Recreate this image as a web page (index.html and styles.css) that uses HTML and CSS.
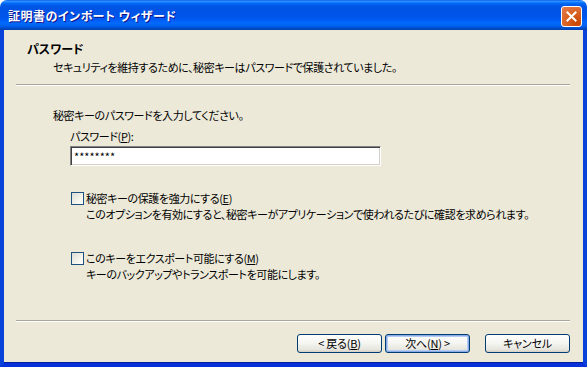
FILE: index.html
```html
<!DOCTYPE html>
<html lang="ja">
<head>
    <meta charset="UTF-8">
    <title>証明書のインポート ウィザード</title>
    <link rel="stylesheet" href="styles.css">
</head>
<body>
    <div class="window">
        <div class="titlebar">
            <span class="titlebar__text">証明書のインポート ウィザード</span>
            <button class="close-btn" aria-label="閉じる">
                <svg viewBox="0 0 21 21" width="21" height="21">
                    <path d="M6 6l9 9M15 6l-9 9" stroke="#fff" stroke-width="2.2" stroke-linecap="square"/>
                </svg>
            </button>
        </div>
        <div class="frame">
            <div class="header">
                <h1 class="header__title">パスワード</h1>
                <p class="header__desc">セキュリティを維持するために、秘密キーはパスワードで保護されていました。</p>
            </div>
            <div class="separator"></div>

            <div class="content">
                <p class="prompt">秘密キーのパスワードを入力してください。</p>

                <div class="field">
                    <label class="field__label" for="pw">パスワード(<u>P</u>):</label>
                    <input class="field__input" id="pw" type="text" value="********">
                </div>

                <div class="option">
                    <span class="checkbox"></span>
                    <div class="option__text">
                        <div>秘密キーの保護を強力にする(<u>E</u>)</div>
                        <div>このオプションを有効にすると、秘密キーがアプリケーションで使われるたびに確認を求められます。</div>
                    </div>
                </div>

                <div class="option option--second">
                    <span class="checkbox"></span>
                    <div class="option__text">
                        <div>このキーをエクスポート可能にする(<u>M</u>)</div>
                        <div>キーのバックアップやトランスポートを可能にします。</div>
                    </div>
                </div>
            </div>

            <div class="footer">
                <div class="separator separator--footer"></div>
                <div class="buttons">
                    <button class="btn">&lt; 戻る(<u>B</u>)</button>
                    <button class="btn btn--default">次へ(<u>N</u>) &gt;</button>
                    <button class="btn btn--cancel">キャンセル</button>
                </div>
            </div>
        </div>
    </div>
</body>
</html>
```

FILE: styles.css
```css
body {
    margin: 0;
    background: #fff;
    font-family: "Noto Sans CJK JP", "Liberation Sans", sans-serif;
    font-size: 11px;
    letter-spacing: -0.4px;
    font-feature-settings: "palt";
    color: #000;
}

.window {
    width: 587px;
    height: 367px;
    display: flex;
    flex-direction: column;
}

.titlebar {
    height: 30px;
    flex-shrink: 0;
    display: flex;
    align-items: center;
    justify-content: space-between;
    padding: 0 5px 0 8px;
    border-radius: 7px 7px 0 0;
    background: linear-gradient(to bottom, #0058ee 0%, #3593ff 4%, #288eff 6%, #127dff 8%, #036ffc 10%, #0262ee 14%, #0057e5 20%, #0054e3 24%, #0055eb 56%, #005bf5 66%, #026afe 76%, #0062ef 86%, #0052d6 92%, #0040ab 100%);
}

.titlebar__text {
    color: #fff;
    font-weight: bold;
    font-size: 12px;
    letter-spacing: 0.5px;
    text-shadow: 1px 1px #0f1089;
    padding-top: 1px;
}

.close-btn {
    width: 21px;
    height: 21px;
    padding: 0;
    margin-top: 2px;
    border: 1px solid #fff;
    border-radius: 3px;
    background: radial-gradient(circle at 80% 85%, #cc4600 0%, #dc6527 55%, #e37b52 100%);
    display: flex;
    align-items: center;
    justify-content: center;
}

.close-btn svg {
    width: 19px;
    height: 19px;
}

.frame {
    flex: 1;
    display: flex;
    flex-direction: column;
    background: #ece9d8;
    border: 4px solid #0842d8;
    border-top: none;
    border-bottom-color: #0831d9;
    box-shadow: inset 0 -1px 0 #001ea0;
}

.header {
    padding: 11px 0 0 23px;
}

.header__title {
    margin: 0;
    font-size: 12px;
    font-weight: bold;
    letter-spacing: 0;
    line-height: 16px;
}

.header__desc {
    margin: 2px 0 0 26px;
    line-height: 16px;
}

.separator {
    margin: 9px 13px 0 12px;
    height: 1px;
    background: #aca899;
    border-bottom: 1px solid #fff;
}

.content {
    padding: 21px 0 0 49px;
}

.prompt {
    margin: 0;
    line-height: 16px;
}

.field {
    margin: 5px 0 0 17px;
}

.field__label {
    display: block;
    line-height: 16px;
}

.field__input {
    display: block;
    box-sizing: border-box;
    width: 311px;
    height: 20px;
    margin-top: 2px;
    padding: 0 3px;
    font-family: inherit;
    font-size: 11px;
    color: #000;
    background: #fff;
    border: 1px solid;
    border-color: #848284 #fff #fff #848284;
    box-shadow: inset 1px 1px #404040, inset -1px -1px #d4d0c8;
    outline: none;
}

.option {
    display: flex;
    align-items: flex-start;
    margin: 24px 0 0 18px;
}

.option--second {
    margin-top: 28px;
}

.checkbox {
    width: 13px;
    height: 13px;
    box-sizing: border-box;
    flex-shrink: 0;
    margin-top: 2px;
    border: 1px solid #1c5180;
    background: linear-gradient(135deg, #dcdcd7 0%, #f5f4ea 60%, #fff 100%);
}

.option__text {
    margin-left: 2px;
    line-height: 16px;
}

.footer {
    margin-top: auto;
}

.separator--footer {
    margin-top: 0;
}

.buttons {
    display: flex;
    justify-content: flex-end;
    padding: 12px 13px 10px 0;
}

.btn {
    width: 85px;
    height: 19px;
    padding: 0;
    font-family: inherit;
    font-size: 11px;
    letter-spacing: -0.2px;
    font-feature-settings: "palt";
    line-height: 15px;
    color: #000;
    border: 1px solid #003c74;
    border-radius: 3px;
    background: linear-gradient(to bottom, #fff 0%, #f4f4f0 50%, #e6e5de 85%, #d6d0c5 100%);
}

.btn + .btn {
    margin-left: 3px;
}

.btn--default {
    box-shadow: inset 0 0 0 1px #89ade4, inset 0 0 0 2px #b6cbf3;
}

.btn--cancel {
    margin-left: 15px !important;
}

u {
    text-decoration: underline;
}
```
